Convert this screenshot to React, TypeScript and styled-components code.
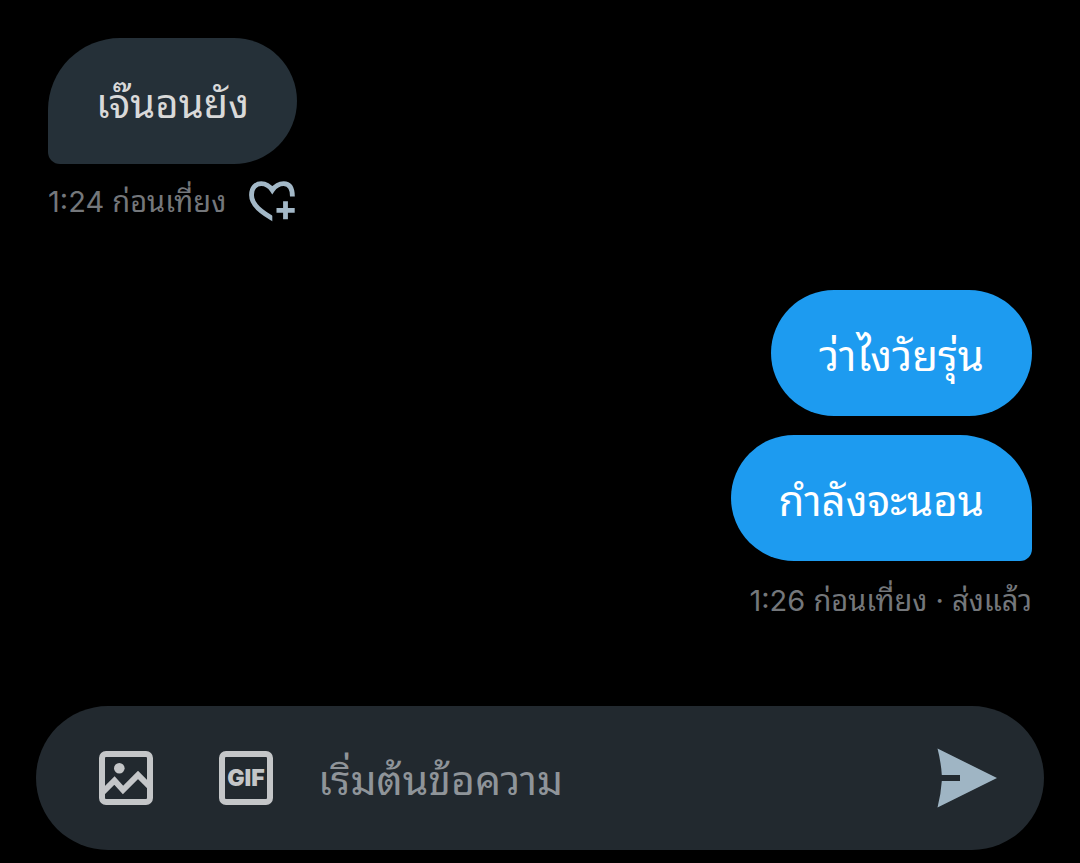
import React from "react";
import styled, { createGlobalStyle } from "styled-components";

const GlobalStyle = createGlobalStyle`
  * { box-sizing: border-box; }
  body {
    margin: 0;
    background: #000;
    font-family: Inter, "Noto Sans Thai Looped", "Noto Looped Thai", Loma, Waree, Garuda, "Noto Sans Thai", "Noto Sans", sans-serif;
  }
`;

const Screen = styled.main`
  display: flex;
  flex-direction: column;
  min-height: 100vh;
  padding: 38px 36px 13px;
`;

const Thread = styled.div`
  flex: 1;
  display: flex;
  flex-direction: column;
  gap: 66px;
  padding: 0 12px;
`;

const Group = styled.section<{ $own?: boolean }>`
  display: flex;
  flex-direction: column;
  align-items: ${(p) => (p.$own ? "flex-end" : "flex-start")};
`;

const Bubble = styled.p<{ $own?: boolean; $tail?: "left" | "right" }>`
  margin: 0 0 19px;
  padding: 36px 48px 30px;
  font-size: ${(p) => (p.$own ? "42px" : "40px")};
  line-height: 60px;
  white-space: nowrap;
  color: ${(p) => (p.$own ? "#fff" : "#d9d9d9")};
  background: ${(p) => (p.$own ? "#1d9bf0" : "#253038")};
  border-radius: ${(p) =>
    p.$tail === "left"
      ? "72px 63px 63px 12px"
      : p.$tail === "right"
        ? "63px 72px 12px 63px"
        : "63px"};

  &:last-of-type {
    margin-bottom: 16px;
  }
`;

const Meta = styled.div<{ $own?: boolean }>`
  display: flex;
  align-items: center;
  gap: 22px;
  height: ${(p) => (p.$own ? "48px" : "44px")};
  font-size: 29px;
  line-height: 44px;
  white-space: nowrap;
  color: #74777b;
`;

const IconButton = styled.button<{ $color: string }>`
  display: flex;
  padding: 0;
  border: 0;
  background: none;
  color: ${(p) => p.$color};
  cursor: pointer;
`;

const Composer = styled.form`
  display: flex;
  align-items: center;
  height: 144px;
  padding: 0 46px 0 62px;
  border-radius: 72px;
  background: #22292f;
`;

const Tools = styled.div`
  display: flex;
  gap: 64px;
  margin-right: 44px;
`;

const Field = styled.input`
  flex: 1;
  min-width: 0;
  height: 76px;
  padding: 4px 0 0;
  border: 0;
  outline: 0;
  background: none;
  color: #d9d9d9;
  font-family: inherit;
  font-size: 41px;

  &::placeholder {
    color: #8f9499;
    opacity: 1;
  }
`;

const GifLabel = styled.text`
  font-family: Inter, sans-serif;
  font-size: 23px;
  font-weight: 900;
`;

const HeartPlus = () => (
  <svg width="48" height="42" viewBox="0 0 48 42" fill="none" stroke="currentColor" strokeWidth="4.8" aria-hidden="true">
    <clipPath id="heart-cut">
      <path d="M0 0H48V20H24.300V42H0Z" />
    </clipPath>
    <path
      clipPath="url(#heart-cut)"
      d="M29 40C12.500 31 3.5 23.500 3.5 14C3.5 7 7.700 2.600 13.200 2.600C18.200 2.600 21.700 5.200 24.300 9.200C27 5.200 30.800 2.600 35.700 2.600C41.200 2.600 44.400 7 44.400 15.500"
    />
    <path d="M37.500 20.300V38.300M28.500 29.300H46.700" />
  </svg>
);

const PhotoIcon = () => (
  <svg width="56" height="56" viewBox="0 0 56 56" fill="none" stroke="currentColor" strokeWidth="6" aria-hidden="true">
    <rect x="4" y="4" width="48" height="48" rx="4" />
    <circle cx="21.300" cy="18.300" r="5.300" fill="currentColor" stroke="none" />
    <path d="M5 42L16.500 30.500L25 40L40 25L52 37" />
  </svg>
);

const GifIcon = () => (
  <svg width="56" height="56" viewBox="0 0 56 56" aria-hidden="true">
    <rect x="4" y="4" width="48" height="48" rx="4" fill="none" stroke="currentColor" strokeWidth="6" />
    <GifLabel x="28" y="36" textAnchor="middle" fill="currentColor">
      GIF
    </GifLabel>
  </svg>
);

const SendIcon = () => (
  <svg width="62" height="62" viewBox="0 0 62 62" fill="currentColor" aria-hidden="true">
    <path d="M1.500 1.500L61 31L1.500 60.500Q5 47 5.800 34H24V28H5.800Q5 15 1.500 1.500Z" />
  </svg>
);

export default function App() {
  return (
    <>
      <GlobalStyle />
      <Screen>
        <Thread>
          <Group>
            <Bubble $tail="left">เจ๊นอนยัง</Bubble>
            <Meta>
              <span>1:24 ก่อนเที่ยง</span>
              <IconButton type="button" $color="#a3b8c7" aria-label="ถูกใจ">
                <HeartPlus />
              </IconButton>
            </Meta>
          </Group>
          <Group $own>
            <Bubble $own>ว่าไงวัยรุ่น</Bubble>
            <Bubble $own $tail="right">กำลังจะนอน</Bubble>
            <Meta $own>1:26 ก่อนเที่ยง · ส่งแล้ว</Meta>
          </Group>
        </Thread>
        <Composer onSubmit={(e) => e.preventDefault()}>
          <Tools>
            <IconButton type="button" $color="#c4c6c8" aria-label="รูปภาพ">
              <PhotoIcon />
            </IconButton>
            <IconButton type="button" $color="#c4c6c8" aria-label="GIF">
              <GifIcon />
            </IconButton>
          </Tools>
          <Field type="text" placeholder="เริ่มต้นข้อความ" aria-label="เริ่มต้นข้อความ" />
          <IconButton type="submit" $color="#9fb5c4" aria-label="ส่ง">
            <SendIcon />
          </IconButton>
        </Composer>
      </Screen>
    </>
  );
}
